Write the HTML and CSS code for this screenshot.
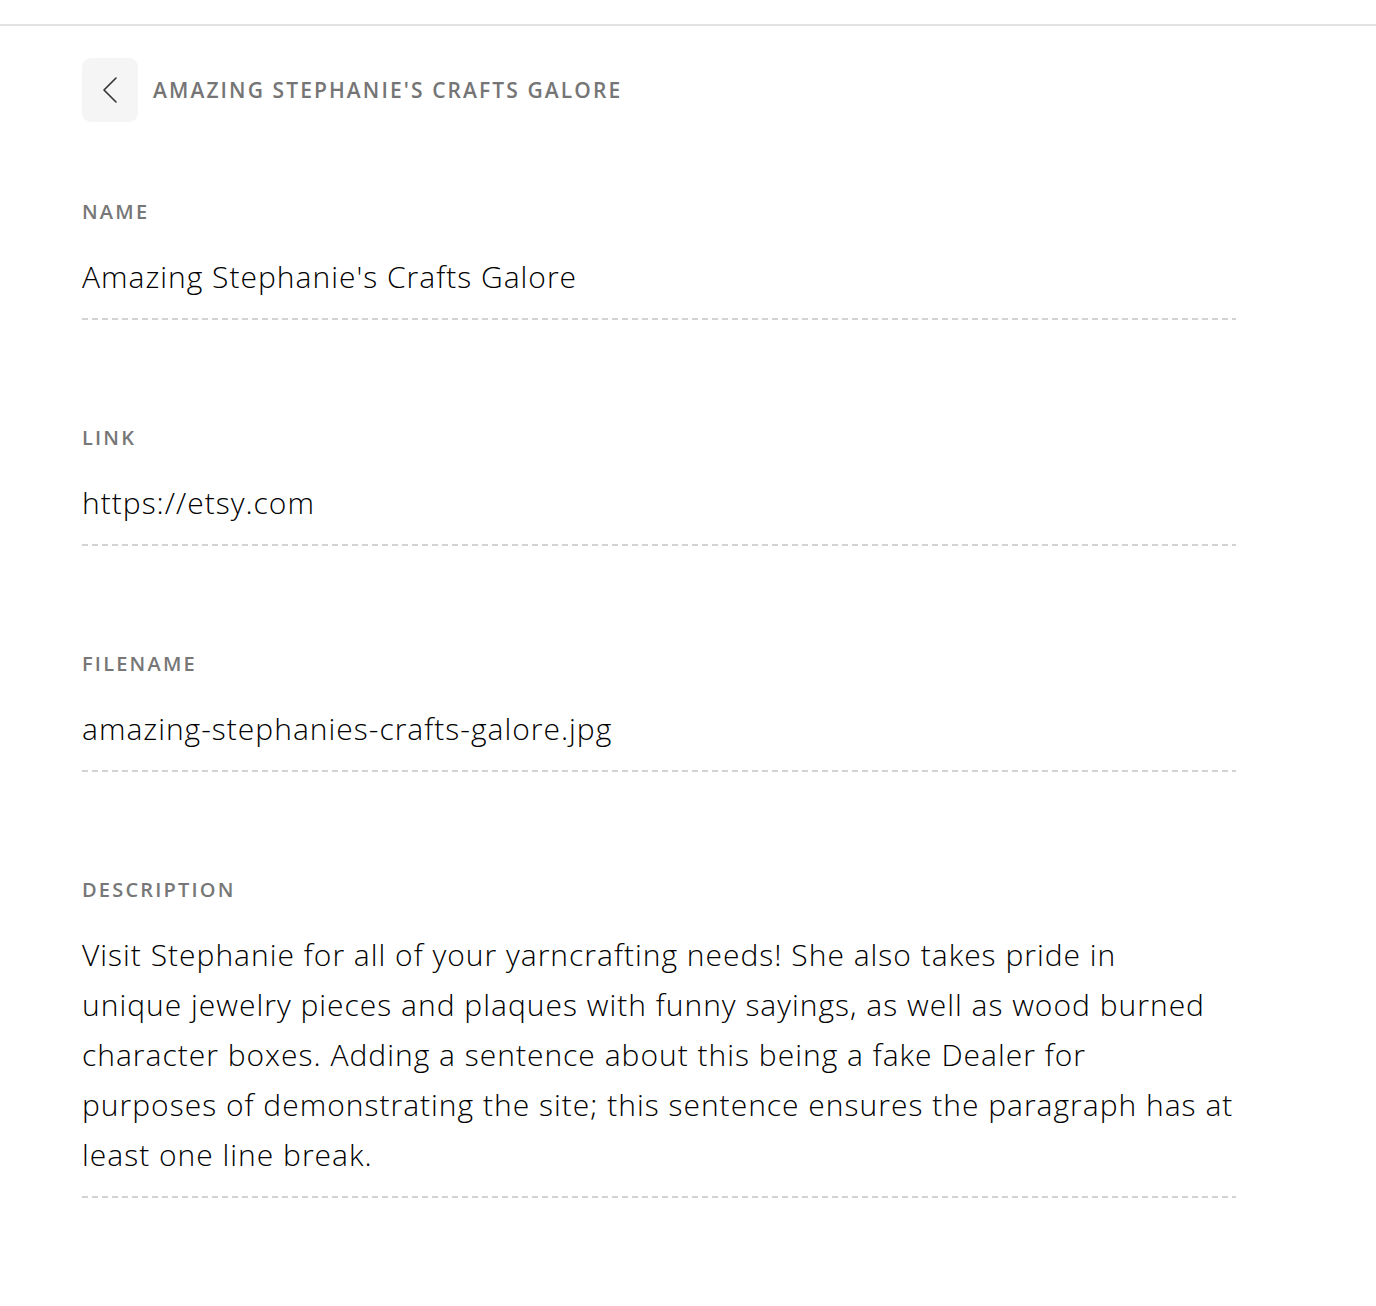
FILE: index.html
```html
<!DOCTYPE html>
<html lang="en">
<head>
<meta charset="utf-8">
<title>Amazing Stephanie's Crafts Galore</title>
<link rel="stylesheet" href="styles.css">
</head>
<body>
<div class="topbar"></div>
<main class="page">
  <header class="page-header">
    <button class="back-btn" type="button" aria-label="Back">
      <svg width="16" height="26" viewBox="0 0 16 26" fill="none" stroke="#333" stroke-width="1.6" stroke-linecap="round" stroke-linejoin="round"><path d="M14 1 L2 13 L14 25"/></svg>
    </button>
    <h1 class="page-title">AMAZING STEPHANIE'S CRAFTS GALORE</h1>
  </header>

  <section class="field">
    <div class="label">NAME</div>
    <div class="value">Amazing Stephanie's Crafts Galore</div>
    <div class="rule"></div>
  </section>

  <section class="field">
    <div class="label">LINK</div>
    <div class="value">https://etsy.com</div>
    <div class="rule"></div>
  </section>

  <section class="field">
    <div class="label">FILENAME</div>
    <div class="value">amazing-stephanies-crafts-galore.jpg</div>
    <div class="rule"></div>
  </section>

  <section class="field">
    <div class="label">DESCRIPTION</div>
    <div class="value description">Visit Stephanie for all of your yarncrafting needs! She also takes pride in<br>unique jewelry pieces and plaques with funny sayings, as well as wood burned<br>character boxes. Adding a sentence about this being a fake Dealer for<br>purposes of demonstrating the site; this sentence ensures the paragraph has at<br>least one line break.</div>
    <div class="rule"></div>
  </section>
</main>
</body>
</html>
```
FILE: styles.css
```css
* { box-sizing: border-box; }
html, body { margin: 0; padding: 0; background: #fff; }
body {
  font-family: "Open Sans", "Noto Sans", sans-serif;
  color: #111;
  font-variant-ligatures: no-common-ligatures;
}
.topbar {
  height: 26px;
  border-bottom: 2px solid #e2e2e2;
}
.page {
  width: 1154px;
  margin-left: 82px;
  padding-top: 32px;
}
.page-header {
  display: flex;
  align-items: center;
  gap: 15px;
}
.back-btn {
  width: 56px;
  height: 64px;
  border: 0;
  border-radius: 9px;
  background: #f5f5f5;
  display: flex;
  align-items: center;
  justify-content: center;
  padding: 0;
}
.page-title {
  margin: 0;
  font-size: 21px;
  font-weight: 600;
  letter-spacing: 2.1px;
  color: #757575;
}
.field {
  margin-top: 78px;
}
.field + .field {
  margin-top: 106px;
}
.label {
  font-size: 20px;
  line-height: 24px;
  font-weight: 600;
  letter-spacing: 2.2px;
  color: #777;
}
.value {
  margin-top: 28px;
  font-size: 30px;
  font-weight: 350;
  line-height: 50px;
  letter-spacing: 1px;
  color: #000;
}
.description {
  white-space: nowrap;
}
.rule {
  margin-top: 16px;
  height: 2px;
  background: repeating-linear-gradient(to right, #d2d2d2 0 6px, transparent 6px 10px);
}
```
